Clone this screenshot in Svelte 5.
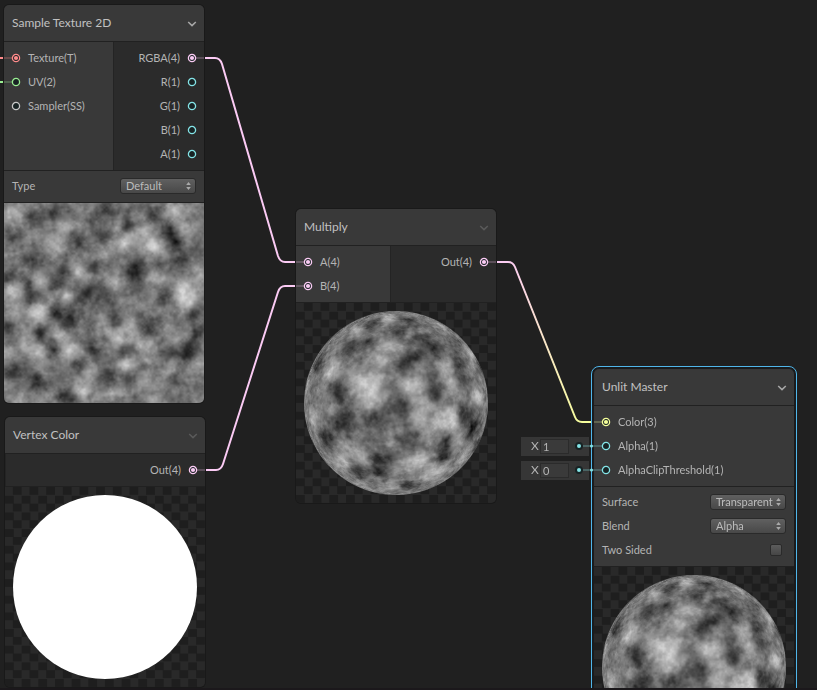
<script>
  const colors = {
    red: '#ff8b8b',
    green: '#9aef92',
    grey: '#c8c8c8',
    cyan: '#84e4e7',
    pink: '#fbcbf4',
    yellow: '#f6ff9a'
  };

  const nodes = [
    {
      title: 'Sample Texture 2D', x: 4, y: 5, open: true, split: 109,
      inputs: [
        { name: 'Texture(T)', color: 'red', linked: true },
        { name: 'UV(2)', color: 'green', stub: true },
        { name: 'Sampler(SS)', color: 'grey' }
      ],
      outputs: [
        { name: 'RGBA(4)', color: 'pink', linked: true },
        { name: 'R(1)', color: 'cyan' },
        { name: 'G(1)', color: 'cyan' },
        { name: 'B(1)', color: 'cyan' },
        { name: 'A(1)', color: 'cyan' }
      ],
      settings: [{ name: 'Type', options: ['Default', 'Normal'] }],
      preview: 'texture'
    },
    {
      title: 'Vertex Color', x: 5, y: 417, split: 0,
      inputs: [],
      outputs: [{ name: 'Out(4)', color: 'pink', linked: true }],
      settings: [],
      preview: 'flat'
    },
    {
      title: 'Multiply', x: 296, y: 209, split: 94,
      inputs: [
        { name: 'A(4)', color: 'pink', linked: true },
        { name: 'B(4)', color: 'pink', linked: true }
      ],
      outputs: [{ name: 'Out(4)', color: 'pink', linked: true }],
      settings: [],
      preview: 'sphere'
    },
    {
      title: 'Unlit Master', x: 594, y: 369, open: true, selected: true, split: 200,
      inputs: [
        { name: 'Color(3)', color: 'yellow', linked: true },
        { name: 'Alpha(1)', color: 'cyan', stub: true, value: '1' },
        { name: 'AlphaClipThreshold(1)', color: 'cyan', stub: true, value: '0' }
      ],
      outputs: [],
      settings: [
        { name: 'Surface', options: ['Transparent', 'Opaque'] },
        { name: 'Blend', options: ['Alpha', 'Premultiply', 'Additive', 'Multiply'] },
        { name: 'Two Sided', toggle: true }
      ],
      preview: 'sphere'
    }
  ];

  // x, y, radius, level
  const textureSpots = [
    [28, 14, 7, -75], [49, 9, 6, -75], [74, 38, 8, -75], [98, 34, 7, -60], [124, 21, 7, -65],
    [166, 28, 8, -85], [172, 40, 7, -70], [178, 58, 8, -65], [10, 28, 8, -45], [9, 39, 7, -40],
    [26, 56, 8, -65], [58, 68, 7, -60], [89, 61, 7, -60], [129, 64, 9, -75], [131, 78, 10, -55],
    [81, 90, 8, -65], [98, 95, 9, -55], [26, 93, 6, -75], [24, 82, 6, -50], [51, 80, 7, -60],
    [51, 109, 7, -90], [63, 118, 7, -90], [36, 131, 7, -85], [48, 146, 7, -60], [4, 124, 7, -60],
    [89, 149, 8, -65], [121, 148, 8, -60], [113, 116, 7, -50], [144, 124, 9, -75], [161, 90, 9, -70],
    [165, 149, 8, -60], [184, 149, 8, -95], [193, 131, 7, -55], [9, 168, 8, -80], [33, 178, 8, -70],
    [63, 193, 8, -85], [101, 174, 9, -75], [124, 174, 7, -55], [169, 179, 8, -35], [188, 111, 7, -60],
    [103, 6, 7, -55], [149, 11, 7, -50], [86, 119, 7, -35], [73, 163, 8, -40], [197, 50, 7, -55],
    [3, 74, 7, -55], [153, 61, 7, -45], [72, 104, 9, -25], [134, 192, 6, -35], [90, 15, 8, -30],
    [9, 13, 11, 60], [49, 41, 10, 60], [61, 24, 8, 50], [119, 39, 10, 75], [148, 43, 9, 95],
    [139, 26, 8, 45], [171, 8, 8, 65], [179, 26, 9, 45], [96, 49, 7, 50], [73, 66, 7, 95],
    [63, 93, 6, 85], [111, 77, 9, 55], [153, 77, 9, 60], [179, 86, 9, 80], [183, 98, 9, 65],
    [8, 88, 9, 70], [36, 79, 6, 55], [36, 109, 8, 95], [11, 111, 9, 45], [66, 146, 8, 95],
    [54, 131, 8, 50], [116, 133, 9, 65], [128, 121, 7, 45], [143, 143, 11, 55], [23, 139, 9, 50],
    [4, 152, 9, 50], [36, 150, 7, 60], [88, 166, 8, 65], [121, 161, 7, 75], [79, 186, 10, 60],
    [108, 189, 8, 50], [139, 179, 9, 50], [166, 163, 8, 50], [193, 163, 8, 40], [171, 138, 7, 50],
    [196, 71, 8, 50], [39, 196, 7, 35], [148, 197, 7, 45], [96, 120, 6, 40], [18, 198, 8, 30]
  ];
  const sphereSpots = [
    [61, 27, 9, 60], [91, 15, 9, 50], [144, 22, 9, 45], [94, 44, 11, 55], [66, 79, 11, 80],
    [79, 90, 10, 55], [71, 101, 8, 55], [114, 84, 10, 80], [151, 64, 8, 60], [154, 80, 7, 55],
    [156, 114, 9, 100], [141, 120, 9, 50], [124, 114, 9, 45], [39, 65, 10, 60], [31, 75, 9, 50],
    [174, 50, 9, 70], [182, 94, 8, 90], [67, 155, 9, 45], [52, 144, 8, 45], [44, 160, 12, 60],
    [111, 160, 10, 50], [137, 169, 11, 75], [127, 157, 8, 50], [161, 137, 9, 60], [167, 154, 10, 50],
    [17, 114, 10, 60], [37, 104, 9, 25], [94, 140, 8, 30], [97, 184, 9, 45], [147, 180, 10, 55],
    [12, 80, 10, 40], [65, 182, 10, 40], [127, 68, 8, 25], [130, 100, 8, 30], [80, 60, 10, 35],
    [76, 20, 9, -75], [102, 29, 8, -65], [113, 17, 8, -60], [54, 44, 9, -60], [74, 39, 8, -55],
    [127, 37, 8, -70], [139, 45, 8, -70], [109, 59, 9, -65], [121, 53, 7, -50], [22, 60, 11, -80],
    [39, 82, 9, -80], [46, 95, 8, -60], [139, 91, 7, -80], [136, 75, 8, -50], [102, 101, 10, -70],
    [79, 115, 9, -70], [51, 113, 8, -60], [39, 118, 8, -65], [111, 137, 9, -70], [31, 135, 10, -80],
    [82, 153, 8, -75], [82, 168, 8, -90], [62, 169, 9, -75], [146, 153, 7, -90], [151, 139, 7, -75],
    [111, 183, 9, -70], [167, 110, 9, -95], [176, 125, 10, -90], [162, 60, 9, -60], [167, 77, 8, -50],
    [184, 64, 9, -60], [51, 126, 8, -40], [180, 142, 10, -50], [96, 152, 7, -35], [160, 40, 9, -45]
  ];

  function hash(x, y) {
    const s = Math.sin(x * 127.1 + y * 311.7) * 43758.5453;
    return s - Math.floor(s);
  }

  function valueNoise(x, y) {
    const ix = Math.floor(x);
    const iy = Math.floor(y);
    const fx = (x - ix) ** 2 * (3 - 2 * (x - ix));
    const fy = (y - iy) ** 2 * (3 - 2 * (y - iy));
    const top = hash(ix, iy) * (1 - fx) + hash(ix + 1, iy) * fx;
    const bottom = hash(ix, iy + 1) * (1 - fx) + hash(ix + 1, iy + 1) * fx;
    return top * (1 - fy) + bottom * fy - 0.5;
  }

  // spreads the disc out so that spots get thinner towards the rim
  function unwrap(x, y) {
    const dx = x - 100;
    const dy = y - 100;
    const d = Math.min(Math.hypot(dx, dy) / 92, 1);
    const k = d > 0 ? Math.asin(d) / d : 1;
    return [100 + dx * k, 100 + dy * k];
  }

  function clouds(canvas, round) {
    const ctx = canvas.getContext('2d');
    const image = ctx.createImageData(200, 200);
    const grow = round ? 1.3 : 1.15;
    const spots = (round ? sphereSpots : textureSpots).map(([x, y, r, level]) => {
      const [u, v] = round ? unwrap(x, y) : [x, y];
      return [u, v, r * grow, level * 0.9];
    });
    for (let y = 0; y < 200; y++) {
      for (let x = 0; x < 200; x++) {
        const i = (y * 200 + x) * 4;
        const rim = Math.hypot(x + 0.5 - 100, y + 0.5 - 100);
        if (round && rim > 92.5) continue;
        const [u, v] = round ? unwrap(x, y) : [x, y];
        let level = 118;
        for (const [sx, sy, r, amount] of spots) {
          const d = ((u - sx) ** 2 + (v - sy) ** 2) / (r * r);
          if (d < 6) level += amount * Math.exp(-d);
        }
        // rotated lattice, so the cells do not line up with the pixel rows
        const a = u * 0.8 + v * 0.6;
        const b = v * 0.8 - u * 0.6;
        level += valueNoise(a / 8 + 40, b / 8) * 42;
        level += valueNoise(a / 4, b / 4 + 70) * 32;
        level += valueNoise(u / 2, v / 2 + 90) * 16;
        image.data[i] = image.data[i + 1] = image.data[i + 2] = level;
        image.data[i + 3] = round ? 255 * Math.min(1, 92.5 - rim) : 255;
      }
    }
    ctx.putImageData(image, 0, 0);
  }
</script>

{#snippet port(p, side)}
  <svg class="port" width="16" height="12" viewBox={side === 'in' ? '0 0 16 12' : '-8 0 16 12'}>
    {#if p.linked || p.stub}
      <path d="M0 6H8" stroke={colors[p.color]} stroke-opacity=".3" stroke-width="1.5" />
    {/if}
    <circle cx={side === 'in' ? 12 : -4} cy="6" r="3.6" fill="#182324" stroke={colors[p.color]} stroke-width="1.3" />
    {#if p.linked}
      <circle cx={side === 'in' ? 12 : -4} cy="6" r="2.1" fill={colors[p.color]} />
    {/if}
  </svg>
{/snippet}

<main class="graph">
  <svg class="wires" width="817" height="690" fill="none" stroke-width="2">
    <defs>
      <linearGradient id="fade" gradientUnits="userSpaceOnUse" x1="496" y1="262" x2="594" y2="422">
        <stop offset="0" stop-color="#fbcbf4" />
        <stop offset="1" stop-color="#f6ff9a" />
      </linearGradient>
    </defs>
    <path d="M0 58H4" stroke={colors.red} />
    <path d="M0 82H4" stroke={colors.green} />
    <path d="M204 58H215Q220 58 222 64L278 256Q280 262 285 262H296" stroke={colors.pink} />
    <path d="M205 470H216Q221 470 223 464L278 292Q280 286 285 286H296" stroke={colors.pink} />
    <path d="M496 262H508Q513 262 515 267L575 417Q577 422 582 422H594" stroke="url(#fade)" />
  </svg>

  {#each nodes as node, n}
    <section class="node" class:selected={node.selected} style="left: {node.x}px; top: {node.y}px">
      <header>
        <h2>{node.title}</h2>
        <button class="fold" class:dim={!node.open} aria-label="Collapse {node.title}">
          <svg width="10" height="6" viewBox="0 0 10 6" fill="none" stroke="currentColor" stroke-width="1.5">
            <path d="M1.2 1L5 4.6L8.8 1" />
          </svg>
        </button>
      </header>

      <div class="ports">
        {#if node.inputs.length}
          <ul class="inputs" style="width: {node.split}px">
            {#each node.inputs as p, i}
              <li>
                {#if p.value}
                  <div class="value">
                    <label for="value-{n}-{i}">X</label>
                    <input id="value-{n}-{i}" type="text" value={p.value} />
                    <svg width="20" height="10" viewBox="0 0 20 10">
                      <path d="M9 5H20" stroke={colors.cyan} stroke-opacity=".35" stroke-width="1.5" />
                      <circle cx="5" cy="5" r="4" fill="#182324" />
                      <circle cx="5" cy="5" r="2" fill={colors.cyan} />
                      <circle cx="17.5" cy="5" r="1.5" fill={colors.cyan} />
                    </svg>
                  </div>
                {/if}
                {@render port(p, 'in')}
                {p.name}
              </li>
            {/each}
          </ul>
        {/if}
        {#if node.outputs.length}
          <ul class="outputs">
            {#each node.outputs as p}
              <li>{p.name}{@render port(p, 'out')}</li>
            {/each}
          </ul>
        {/if}
      </div>

      {#if node.settings.length}
        <div class="settings">
          {#each node.settings as s, i}
            <div class="setting">
              <label for="setting-{n}-{i}">{s.name}</label>
              {#if s.toggle}
                <input id="setting-{n}-{i}" type="checkbox" />
              {:else}
                <div class="dropdown">
                  <select id="setting-{n}-{i}">
                    {#each s.options as option}
                      <option>{option}</option>
                    {/each}
                  </select>
                  <svg width="5" height="8" viewBox="0 0 5 8" fill="#aaa">
                    <path d="M2.5 0L4.8 3H.2ZM2.5 8L4.8 5H.2Z" />
                  </svg>
                </div>
              {/if}
            </div>
          {/each}
        </div>
      {/if}

      <div class="preview">
        {#if node.preview === 'flat'}
          <div class="disc"></div>
        {:else}
          <canvas width="200" height="200" use:clouds={node.preview === 'sphere'}></canvas>
        {/if}
      </div>
    </section>
  {/each}
</main>

<style>
  :global(body) {
    background: #202020;
  }

  .graph {
    position: relative;
    height: 100vh;
    overflow: hidden;
    box-sizing: border-box;
    border-bottom: 2px solid #1b181b;
    background: #202020;
    color: #b4b4b4;
    font: 11px/24px Lato, "Noto Sans", sans-serif;
  }

  .wires {
    position: absolute;
    left: 0;
    top: 0;
  }

  .node {
    position: absolute;
    width: 200px;
    border-radius: 5px;
    box-shadow: 0 0 0 1px #191919;
  }

  .selected {
    box-shadow: 0 0 0 2px #191b1d;
    outline: 1px solid #50b6ea;
    outline-offset: 2px;
  }

  header {
    display: flex;
    align-items: center;
    justify-content: space-between;
    height: 36px;
    padding: 0 7px 0 8px;
    background: #393939;
    border-bottom: 1px solid #212121;
    border-radius: 5px 5px 0 0;
  }

  h2 {
    margin: 0;
    font-size: 12px;
    font-weight: 400;
    color: #c1c1c1;
  }

  .fold {
    display: flex;
    padding: 2px 0 0;
    border: none;
    background: none;
    color: #a8a8a8;
  }

  .dim {
    color: #5a5a5a;
  }

  .ports {
    display: flex;
    background: #2b2b2b;
  }

  ul {
    margin: 0;
    padding: 4px 0;
    list-style: none;
  }

  li {
    position: relative;
    display: flex;
    align-items: center;
    gap: 8px;
    height: 24px;
    white-space: nowrap;
  }

  .inputs {
    background: #393939;
  }

  .outputs {
    flex: 1;
    border-left: 1px solid #242424;
  }

  .outputs li {
    justify-content: flex-end;
  }

  .port {
    flex: none;
    overflow: visible;
  }

  .value {
    position: absolute;
    right: 100%;
    display: flex;
    align-items: center;
    box-sizing: border-box;
    width: 73px;
    height: 19px;
    padding-left: 10px;
    background: linear-gradient(to right, #363636 68px, transparent 68px);
  }

  .value label {
    width: 9px;
    font-size: 12px;
  }

  .value input {
    box-sizing: border-box;
    width: 29px;
    height: 15px;
    margin-right: 5px;
    padding: 0 0 0 2px;
    border: 1px solid #2b2b2b;
    background: #3a3a3a;
    color: inherit;
    font: inherit;
    line-height: 13px;
  }

  .value svg {
    flex: none;
  }

  .settings {
    padding: 3px 8px 4px;
    background: #393939;
    border-top: 1px solid #212121;
  }

  .setting {
    display: flex;
    align-items: center;
    justify-content: space-between;
    height: 24px;
  }

  .dropdown {
    position: relative;
    display: flex;
    align-items: center;
  }

  .dropdown svg {
    position: absolute;
    right: 5px;
  }

  select {
    appearance: none;
    box-sizing: border-box;
    width: 76px;
    height: 16px;
    padding: 0 0 0 5px;
    border: 1px solid #2a2a2a;
    border-radius: 3px;
    background: linear-gradient(#606060, #484848);
    color: #bcbcbc;
    font: inherit;
    line-height: 14px;
  }

  input[type="checkbox"] {
    appearance: none;
    width: 12px;
    height: 12px;
    margin: 0 4px 0 0;
    border: 1px solid #2a2a2a;
    border-radius: 2px;
    background: linear-gradient(#5c5c5c, #464646);
  }

  .preview {
    height: 200px;
    border-top: 1px solid #212121;
    border-radius: 0 0 5px 5px;
    background: repeating-conic-gradient(#1e1e1e 0 25%, #292929 0 50%) 0 0 / calc(100% / 12) calc(100% / 12);
    overflow: hidden;
  }

  .disc {
    width: 184px;
    height: 184px;
    margin: 8px;
    border-radius: 50%;
    background: #fff;
  }

  canvas {
    display: block;
  }
</style>
